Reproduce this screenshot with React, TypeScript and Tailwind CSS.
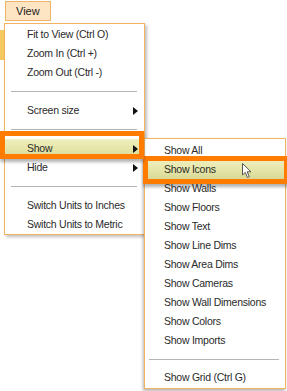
import React from "react";

const font = { fontFamily: '"Liberation Sans", Arial, sans-serif' };
const hlBg = "bg-gradient-to-b from-[#eeeec0] via-[#e6e6a8] to-[#d8d898]";

function Arrow() {
  return (
    <svg width="5" height="8" viewBox="0 0 5 8" className="shrink-0">
      <path d="M0 0 L5 4 L0 8 Z" fill="#111" />
    </svg>
  );
}

function Item({
  label,
  arrow,
  hl,
  children,
}: {
  label: string;
  arrow?: boolean;
  hl?: boolean;
  children?: React.ReactNode;
}) {
  return (
    <div
      className={
        "relative h-[19px] flex items-center justify-between pl-[22px] pr-[6px] text-[10.5px] tracking-[-0.25px] text-[#2a2a2a] " +
        (hl ? hlBg : "")
      }
    >
      <span>{label}</span>
      {arrow && <Arrow />}
      {children}
    </div>
  );
}

function Sep({ h = "h-[19px]", pad = "pl-[6px] pr-[7px]" }: { h?: string; pad?: string }) {
  return (
    <div className={h + " flex items-center " + pad}>
      <div className="h-px w-full bg-[#b4b4b4]" />
    </div>
  );
}

function SubItem({ label, hl, children }: { label: string; hl?: boolean; children?: React.ReactNode }) {
  return (
    <div
      className={
        "relative h-[19px] flex items-center pl-[19px] text-[10.5px] tracking-[-0.25px] text-[#2a2a2a] " +
        (hl ? hlBg : "")
      }
    >
      <span>{label}</span>
      {children}
    </div>
  );
}

function Cursor() {
  return (
    <svg className="absolute left-[97px] top-[3px]" width="11" height="16" viewBox="0 0 11 16">
      <path
        d="M0.5 0.5 L0.5 12 L3.3 9.4 L5.4 14.5 L7.3 13.7 L5.2 8.8 L9 8.8 Z"
        fill="#fff"
        stroke="#555"
        strokeWidth="1"
        strokeLinejoin="round"
      />
    </svg>
  );
}

function SubMenu() {
  const subs = [
    "Show All",
    "Show Icons",
    "Show Walls",
    "Show Floors",
    "Show Text",
    "Show Line Dims",
    "Show Area Dims",
    "Show Cameras",
    "Show Wall Dimensions",
    "Show Colors",
    "Show Imports",
  ];
  return (
    <div className="absolute left-full top-[-1px] z-10 w-[142px] flex flex-col bg-white border border-[#f2b460] shadow-[-1px_2px_3px_rgba(0,0,0,0.3)] pt-[2px] pb-[1px]">
      {subs.map((s) =>
        s === "Show Icons" ? (
          <SubItem key={s} label={s} hl>
            <Cursor />
            <div className="absolute left-[-2px] top-[-4px] w-[146px] h-[28px] border-[5px] border-[#ff7c00] shadow-[0_3px_3px_rgba(0,0,0,0.3)]" />
          </SubItem>
        ) : (
          <SubItem key={s} label={s} />
        )
      )}
      <Sep h="h-[18px]" pad="pl-[4px] pr-[6px]" />
      <SubItem label="Show Grid (Ctrl G)" />
    </div>
  );
}

export default function App() {
  return (
    <div className="relative w-[287px] h-[391px] bg-white overflow-hidden flex" style={font}>
      <div className="w-[4px] shrink-0 pt-[30px]">
        <div className="h-[30px] bg-[#f5c860]" />
      </div>
      <div className="flex flex-col items-start pt-[1px]">
        {/* View button */}
        <div className="ml-[1px] w-[46px] h-[20px] bg-[#fde4c2] border border-[#f0b468] flex items-center pl-[10px] text-[11px] text-[#222]">
          View
        </div>

        {/* Main menu */}
        <div className="mt-[2px] w-[141px] flex flex-col bg-white border border-[#f2b460] shadow-[2px_2px_3px_rgba(0,0,0,0.25)] pt-[1px]">
          <Item label="Fit to View (Ctrl O)" />
          <Item label="Zoom In (Ctrl +)" />
          <Item label="Zoom Out (Ctrl -)" />
          <Sep />
          <Item label="Screen size" arrow />
          <Sep />
          <Item label="Show" arrow hl>
            <div className="absolute left-[-5px] top-[-8px] w-[144px] h-[28px] z-20 border-[5px] border-[#ff7c00] shadow-[0_3px_3px_rgba(0,0,0,0.3)]" />
            <SubMenu />
          </Item>
          <Item label="Hide" arrow />
          <Sep />
          <Item label="Switch Units to Inches" />
          <Item label="Switch Units to Metric" />
        </div>
      </div>
    </div>
  );
}
